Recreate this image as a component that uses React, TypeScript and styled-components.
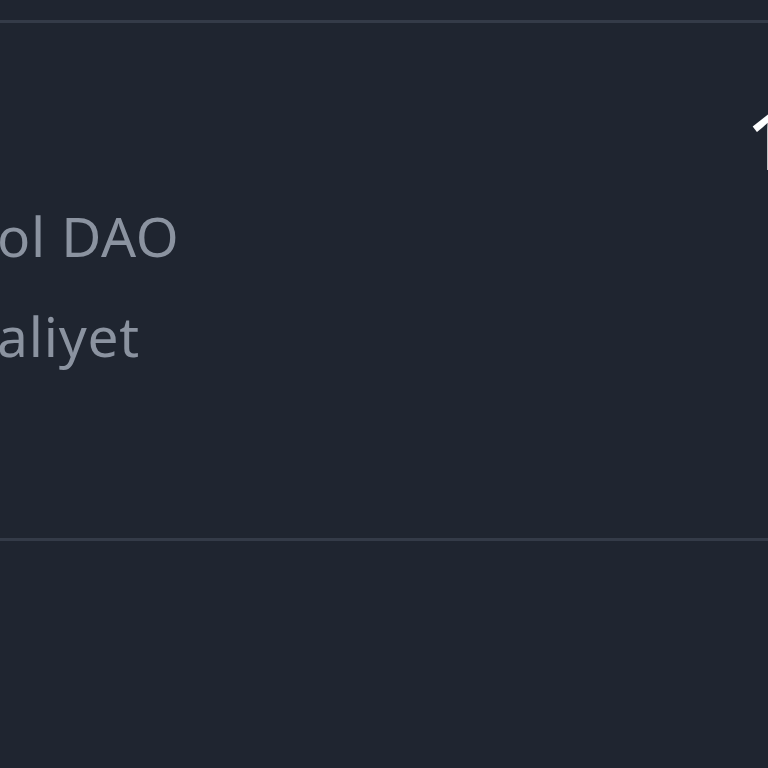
import React from "react";
import styled, { createGlobalStyle } from "styled-components";

const GlobalStyle = createGlobalStyle`
  html, body {
    margin: 0;
    padding: 0;
    background: #1f2530;
    overflow: hidden;
  }
  body {
    font-family: "Noto Sans", "Open Sans", sans-serif;
  }
`;

const Page = styled.div`
  width: 768px;
  height: 768px;
  overflow: hidden;
  background: #1f2530;
  display: flex;
  flex-direction: column;
`;

const Divider = styled.div<{ $top: number }>`
  height: 3px;
  margin-top: ${(p) => p.$top}px;
  background: #343b48;
  flex-shrink: 0;
`;

const Card = styled.section`
  height: 515px;
  padding-top: 78px;
  box-sizing: border-box;
  display: flex;
  flex-direction: column;
`;

const HeaderRow = styled.div`
  display: flex;
  justify-content: flex-end;
`;

const Value = styled.span`
  font-size: 78px;
  line-height: 78px;
  font-weight: 500;
  color: #ffffff;
  margin-right: -23px;
  white-space: nowrap;
`;

const Labels = styled.ul`
  list-style: none;
  margin: 7px 0 0 -3px;
  padding: 0;
  display: flex;
  flex-direction: column;
`;

const Label = styled.li`
  font-size: 55px;
  line-height: 100px;
  letter-spacing: 0.8px;
  color: #8b93a0;
  white-space: nowrap;
`;

export default function App() {
  return (
    <>
      <GlobalStyle />
      <Page>
        <Divider $top={20} />
        <Card>
          <HeaderRow>
            <Value>1</Value>
          </HeaderRow>
          <Labels>
            <Label>ol DAO</Label>
            <Label>aliyet</Label>
          </Labels>
        </Card>
        <Divider $top={0} />
      </Page>
    </>
  );
}
